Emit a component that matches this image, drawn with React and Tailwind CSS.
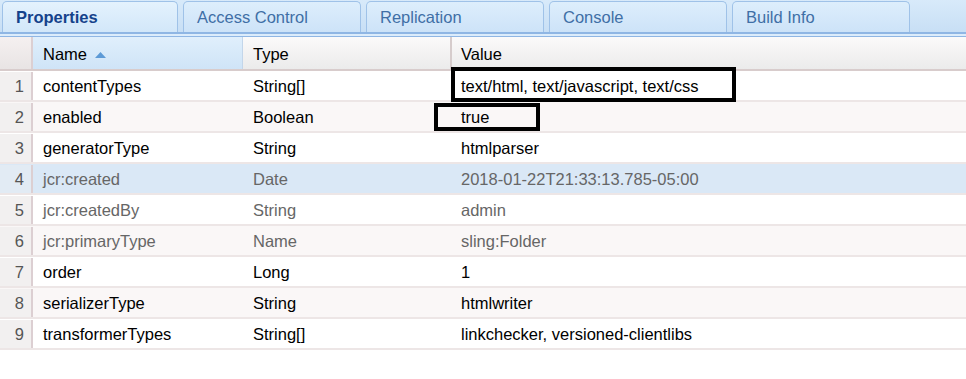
import React from "react";

const tabs = ["Properties", "Access Control", "Replication", "Console", "Build Info"];

const rows = [
  { name: "contentTypes", type: "String[]", value: "text/html, text/javascript, text/css" },
  { name: "enabled", type: "Boolean", value: "true" },
  { name: "generatorType", type: "String", value: "htmlparser" },
  { name: "jcr:created", type: "Date", value: "2018-01-22T21:33:13.785-05:00", muted: true, selected: true },
  { name: "jcr:createdBy", type: "String", value: "admin", muted: true },
  { name: "jcr:primaryType", type: "Name", value: "sling:Folder", muted: true },
  { name: "order", type: "Long", value: "1" },
  { name: "serializerType", type: "String", value: "htmlwriter" },
  { name: "transformerTypes", type: "String[]", value: "linkchecker, versioned-clientlibs" },
];

function Tab({ label, active }) {
  return (
    <div
      className={
        "h-[31px] mt-[1px] flex items-center pl-[13px] pt-[1px] rounded-t-[5px] border border-b-0 border-[#9fc2e8] text-[16.5px] " +
        (active
          ? "bg-gradient-to-b from-[#e4f2fd] to-[#d2e7f9] font-bold text-[#15428b] w-[176px]"
          : "bg-gradient-to-b from-[#ddeefc] to-[#cde3f8] text-[#3f6fa6] w-[178px]")
      }
    >
      {label}
    </div>
  );
}

function Row({ row, index }) {
  const even = index % 2 === 1;
  let bg = even ? "bg-[#faf7f7]" : "bg-white";
  if (row.selected) bg = "bg-[#dae8f6]";
  const text = row.muted ? "text-[#666666]" : "text-black";
  return (
    <div className={"flex h-[31px] pt-[1px] border-b-2 border-[#ede6e6] " + bg}>
      <div
        className={
          "w-[33px] shrink-0 flex items-center justify-end pr-[7px] border-r-2 border-[#dccfd2] text-[#555555] " +
          (row.selected ? "bg-[#e2ebf4]" : "bg-[#f2f0f0]")
        }
      >
        {index + 1}
      </div>
      <div className={"w-[210px] shrink-0 flex items-center pl-[10px] " + text}>{row.name}</div>
      <div className={"w-[209px] shrink-0 flex items-center pl-[10px] " + text}>{row.type}</div>
      <div className={"flex-1 flex items-center pl-[9px] " + text}>{row.value}</div>
    </div>
  );
}

export default function App() {
  return (
    <div className="relative w-[966px] h-[379px] bg-white overflow-hidden text-[16.5px] font-['Liberation_Sans',Arial,sans-serif]">
      {/* tab strip */}
      <div className="h-[32px] flex gap-[5px] pl-[2px] bg-gradient-to-b from-[#d8eafa] to-[#c8dff5]">
        {tabs.map((t, i) => (
          <Tab key={t} label={t} active={i === 0} />
        ))}
      </div>
      <div className="h-[5px] border-t-2 border-b border-[#8fb6e4] bg-[#dcecfb]" />

      {/* header */}
      <div className="flex h-[34px] pt-[3px] border-b-2 border-[#d8cccc] bg-gradient-to-b from-[#fbfafa] to-[#ebebeb]">
        <div className="w-[33px] shrink-0 -mt-[3px] border-r-2 border-[#dccfd2] bg-gradient-to-b from-[#f5f0f0] to-[#e8e4e4]" />
        <div className="w-[210px] shrink-0 -mt-[3px] pt-[3px] flex items-center pl-[10px] gap-[8px] bg-gradient-to-b from-[#e0effc] to-[#cfe4f7] border-r border-[#c3d6ea]">
          <span>Name</span>
          <svg width="11" height="6" viewBox="0 0 11 6" className="mt-[1px]">
            <path d="M0 6 L5.5 0 L11 6 Z" fill="#5d9ad6" />
          </svg>
        </div>
        <div className="w-[209px] shrink-0 -mt-[3px] pt-[3px] flex items-center pl-[10px] border-r-2 border-[#d6cccc]">Type</div>
        <div className="flex-1 flex items-center pl-[9px]">Value</div>
      </div>

      {rows.map((r, i) => (
        <Row key={r.name} row={r} index={i} />
      ))}

      {/* annotation boxes */}
      <div className="absolute left-[451px] top-[67px] w-[285px] h-[35px] border-[4px] border-black" />
      <div className="absolute left-[434px] top-[103px] w-[106px] h-[28px] border-[4px] border-black" />
    </div>
  );
}
